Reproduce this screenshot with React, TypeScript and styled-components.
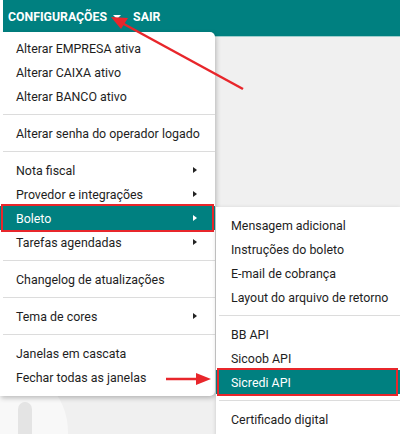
import React from 'react';
import styled, {createGlobalStyle} from 'styled-components';

const GlobalStyle = createGlobalStyle`
  html, body {
    margin: 0;
    padding: 0;
    background: #ffffff;
  }

  body {
    font-family: Roboto, "Liberation Sans", sans-serif;
  }
`

const TEAL = '#008080';
const RED = '#e8262b';

const Page = styled.div`
  position: relative;
  width: 400px;
  height: 434px;
  overflow: hidden;
  display: flex;
  flex-direction: column;
  background: #ffffff;
`

const TopBar = styled.div`
  height: 37px;
  margin-left: 3px;
  background-color: ${TEAL};
  display: flex;
  align-items: center;
  padding: 0 0 0 5px;
  gap: 12px;
  border-bottom: 1px solid #9fcfcd;
  box-sizing: border-box;
`

const BarLink = styled.div`
  color: #fff;
  font-size: 12.3px;
  font-weight: 700;
  display: flex;
  align-items: center;
  gap: 6px;
  padding-bottom: 3px;
`

const Caret = styled.span`
  width: 0;
  height: 0;
  border-left: 4px solid transparent;
  border-right: 4px solid transparent;
  border-top: 4px solid #fff;
  margin-top: 1px;
`

const Workspace = styled.div`
  flex: 1;
  background-color: #f0f0f0;
  position: relative;
`

const Watermark = styled.svg`
  position: absolute;
  left: -70px;
  top: 325px;
`

const Menu = styled.div<{ $top: number, $left: number, $width: number }>`
  position: absolute;
  top: ${p => p.$top}px;
  left: ${p => p.$left}px;
  width: ${p => p.$width}px;
  background: #fff;
  box-shadow: 1px 2px 5px rgba(0, 0, 0, .25);
  display: flex;
  flex-direction: column;
`

const MainMenu = styled(Menu)`
  border-radius: 0 5px 5px 0;
  padding: 4px 0 7px;
`

const SubMenu = styled(Menu)`
  padding: 6px 0 7px;
  border-radius: 0 0 0 3px;
`

const Item = styled.div<{ $active?: boolean, $pad: number }>`
  position: relative;
  height: 24px;
  display: flex;
  align-items: center;
  justify-content: space-between;
  padding: 0 18px 0 ${p => p.$pad}px;
  font-size: 12.4px;
  color: ${p => p.$active ? '#fff' : '#1e1e1e'};
  background-color: ${p => p.$active ? TEAL : 'transparent'};
  white-space: nowrap;
`

const Highlight = styled.div<{ $right: number }>`
  position: absolute;
  top: -2px;
  bottom: -2px;
  left: 1px;
  right: ${p => p.$right}px;
  border: 2px solid ${RED};
`

const SubArrow = styled.span<{ $active?: boolean }>`
  width: 0;
  height: 0;
  border-top: 3.5px solid transparent;
  border-bottom: 3.5px solid transparent;
  border-left: 4px solid ${p => p.$active ? '#fff' : '#222'};
`

const Divider = styled.div`
  height: 1px;
  background: #dcdcdc;
  margin: 6px 0 6px 3px;
`

const Arrows = styled.svg`
  position: absolute;
  left: 0;
  top: 0;
  pointer-events: none;
`

interface Entry {
    label?: string,
    sub?: boolean,
    active?: boolean,
    boxed?: boolean,
}

const mainItems: Entry[] = [
    {label: 'Alterar EMPRESA ativa'},
    {label: 'Alterar CAIXA ativo'},
    {label: 'Alterar BANCO ativo'},
    {},
    {label: 'Alterar senha do operador logado'},
    {},
    {label: 'Nota fiscal', sub: true},
    {label: 'Provedor e integrações', sub: true},
    {label: 'Boleto', sub: true, active: true, boxed: true},
    {label: 'Tarefas agendadas', sub: true},
    {},
    {label: 'Changelog de atualizações'},
    {},
    {label: 'Tema de cores', sub: true},
    {},
    {label: 'Janelas em cascata'},
    {label: 'Fechar todas as janelas'},
]

const subItems: Entry[] = [
    {label: 'Mensagem adicional'},
    {label: 'Instruções do boleto'},
    {label: 'E-mail de cobrança'},
    {label: 'Layout do arquivo de retorno'},
    {},
    {label: 'BB API'},
    {label: 'Sicoob API'},
    {label: 'Sicredi API', active: true, boxed: true},
    {},
    {label: 'Certificado digital'},
]

function renderEntries(entries: Entry[], pad: number, boxRight: number) {
    return entries.map((e, i) => {
        if (!e.label) return <Divider key={i}/>;
        return (
            <Item key={i} $active={e.active} $pad={pad}>
                <span>{e.label}</span>
                {e.sub && <SubArrow $active={e.active}/>}
                {e.boxed && <Highlight $right={boxRight}/>}
            </Item>
        )
    })
}

export default function App() {
    return (
        <>
            <GlobalStyle/>
            <Page>
                <TopBar>
                    <BarLink>CONFIGURAÇÕES <Caret/></BarLink>
                    <BarLink>SAIR</BarLink>
                </TopBar>
                <Workspace>
                    <Watermark width="140" height="140" viewBox="0 0 140 140">
                        <circle cx="70" cy="70" r="68" fill="#f8f8f8"/>
                        <rect x="88" y="40" width="14" height="60" rx="7" fill="#e4e4e4"/>
                    </Watermark>
                </Workspace>

                <MainMenu $top={32} $left={0} $width={215}>
                    {renderEntries(mainItems, 16, 1)}
                </MainMenu>

                <SubMenu $top={207} $left={216} $width={184}>
                    {renderEntries(subItems, 15, 2)}
                </SubMenu>

                <Arrows width="400" height="434" viewBox="0 0 400 434">
                    <line x1="243" y1="89" x2="122" y2="23" stroke={RED} strokeWidth="2.5"/>
                    <polygon points="111,17 128,18 121,29" fill={RED}/>
                    <line x1="166" y1="379" x2="198" y2="379" stroke={RED} strokeWidth="2.5"/>
                    <polygon points="211,379 196,373 196,385" fill={RED}/>
                </Arrows>
            </Page>
        </>
    )
}
